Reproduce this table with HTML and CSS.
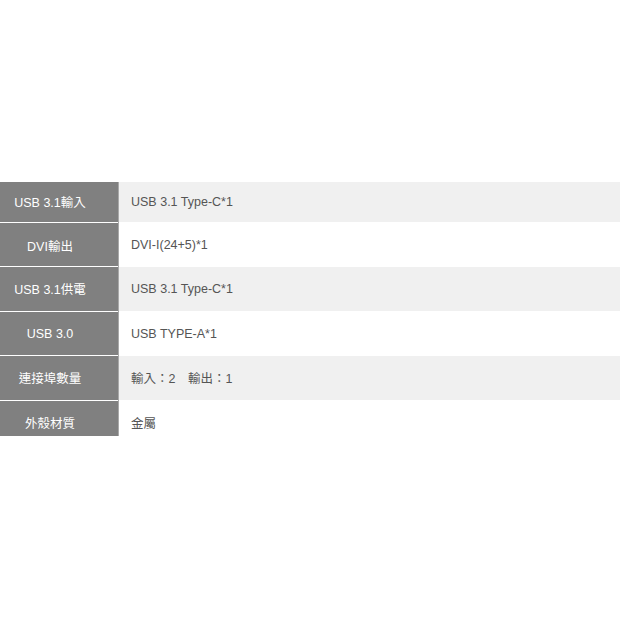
FILE: index.html
```html
<!DOCTYPE html>
<html lang="zh-Hant">
<head>
<meta charset="utf-8">
<link rel="stylesheet" href="styles.css">
</head>
<body>
<div class="page">
  <table class="spec">
    <tr class="r1 odd"><th>USB 3.1輸入</th><td>USB 3.1 Type-C*1</td></tr>
    <tr class="r2"><th>DVI輸出</th><td>DVI-I(24+5)*1</td></tr>
    <tr class="r3 odd"><th>USB 3.1供電</th><td>USB 3.1 Type-C*1</td></tr>
    <tr class="r4"><th>USB 3.0</th><td>USB TYPE-A*1</td></tr>
    <tr class="r5 odd"><th>連接埠數量</th><td>輸入：2　輸出：1</td></tr>
    <tr class="r6"><th>外殼材質</th><td>金屬</td></tr>
  </table>
</div>
</body>
</html>
```

FILE: styles.css
```css
html, body {
  margin: 0;
  padding: 0;
  background: #ffffff;
}
.page {
  width: 620px;
  height: 620px;
  padding-top: 182px;
  box-sizing: border-box;
}
.spec {
  width: 620px;
  border-collapse: collapse;
  font-family: "Liberation Sans", Arial, "Noto Sans CJK TC", sans-serif;
  font-size: 12.5px;
}
.spec th,
.spec td {
  padding: 0;
  border-top: 1px solid #ffffff;
  vertical-align: middle;
}
.spec tr:first-child th,
.spec tr:first-child td {
  border-top: none;
}
.spec th {
  width: 100px;
  padding-right: 18px;
  background: #808080;
  color: #ffffff;
  font-weight: normal;
  text-align: center;
  border-right: 1px solid #a9a9a9;
}
.spec td {
  padding-left: 12px;
  color: #555555;
  background: #ffffff;
  text-align: left;
}
.spec tr.odd td {
  background: #f0f0f0;
}
.r1 { height: 40px; }
.r2 th, .r2 td { padding-top: 2px; }
.r2 { height: 44px; }
.r3 { height: 45px; }
.r4 th, .r4 td { padding-top: 2px; }
.r4 { height: 44px; }
.r5 { height: 45px; }
.r6 { height: 36px; }
.r6 th, .r6 td { padding-top: 8px; }
```
